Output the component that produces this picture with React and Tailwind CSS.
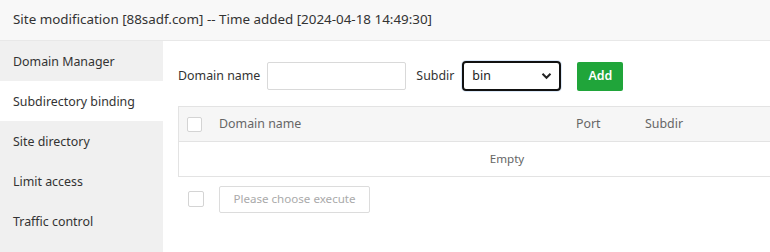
import React from "react";

const menu = ["Domain Manager", "Subdirectory binding", "Site directory", "Limit access", "Traffic control"];

const App = () => {
  return (
    <div className="w-[770px] h-[252px] overflow-hidden bg-white text-[#333] font-['Noto_Sans','Open_Sans',sans-serif]">
      <div className="h-[41px] flex items-center px-[13px] pb-[1px] bg-[#f8f8f8] border-b border-[#e8e8e8] text-[13.4px] text-[#333]">
        Site modification [88sadf.com] -- Time added [2024-04-18 14:49:30]
      </div>
      <div className="flex h-[211px]">
        <div className="w-[163px] shrink-0 bg-[#f0f0f0]">
          {menu.map((m, i) => (
            <div
              key={m}
              className={`h-[40px] flex items-center pl-[13px] pt-[2px] text-[12.4px] text-[#333] ${i === 1 ? "bg-white" : ""}`}
            >
              {m}
            </div>
          ))}
        </div>
        <div className="flex-1 pl-[15px] pt-[20px] min-w-0 overflow-hidden">
          <div className="flex items-center h-[30px] text-[12.4px] text-[#333]">
            <span>Domain name</span>
            <input className="ml-[7px] w-[139px] h-[28px] border border-[#d9d9d9] rounded-[2px] outline-none px-2" />
            <span className="ml-[10px]">Subdir</span>
            <div className="ml-[8px] w-[99px] h-[30px] shrink-0 border-2 border-[#111] rounded-[4px] flex items-center justify-between pl-[8px] pr-[7px] shadow-[0_0_0_1px_#dbe8f8]">
              <span className="text-[12.4px] text-[#222]">bin</span>
              <svg width="11" height="8" viewBox="0 0 11 8">
                <path d="M1.5 1.8 L5.5 5.8 L9.5 1.8" fill="none" stroke="#222" strokeWidth="2" />
              </svg>
            </div>
            <button className="ml-[16px] w-[46px] h-[29px] shrink-0 bg-[#20a53a] text-white rounded-[2px] text-[12.4px] font-semibold">
              Add
            </button>
          </div>
          <div className="mt-[15px] w-[658px] border border-[#e3e3e3]">
            <div className="h-[35px] flex items-center bg-[#f6f6f6] border-b border-[#e3e3e3] text-[12.4px] text-[#666]">
              <div className="ml-[8px] w-[15px] h-[15px] border border-[#d4d4d4] rounded-[2px] bg-white" />
              <span className="ml-[17px] w-[357px]">Domain name</span>
              <span className="w-[69px]">Port</span>
              <span>Subdir</span>
            </div>
            <div className="h-[34px] flex items-center justify-center pb-[1px] text-[11.6px] text-[#666]">Empty</div>
          </div>
          <div className="flex items-center mt-[8px] h-[28px]">
            <div className="ml-[10px] w-[16px] h-[16px] border border-[#d4d4d4] rounded-[2px]" />
            <div className="ml-[15px] w-[151px] h-[27px] border border-[#dcdcdc] rounded-[2px] flex items-center justify-center text-[11.6px] text-[#aaa]">
              Please choose execute
            </div>
          </div>
        </div>
      </div>
    </div>
  );
};

export default App;
